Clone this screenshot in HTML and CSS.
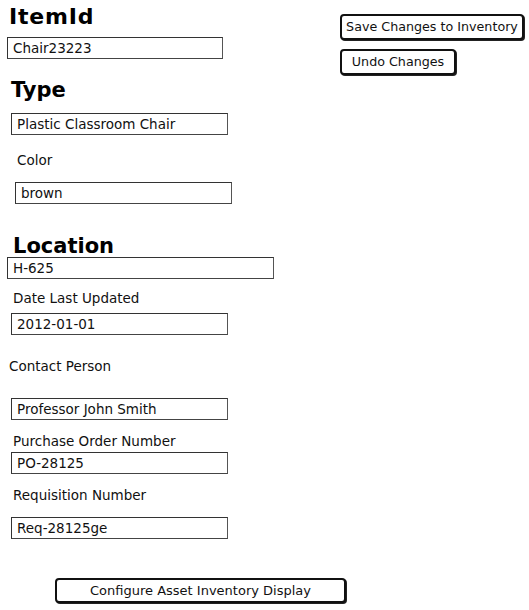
FILE: index.html
```html
<!DOCTYPE html>
<html lang="en">
<head>
<meta charset="utf-8">
<title>Asset Inventory Item</title>
<link rel="stylesheet" href="styles.css">
</head>
<body>
<div class="page">
  <div class="top">
    <form class="form">
      <h1 class="heading heading-item">ItemId</h1>
      <input class="field f-item" value="Chair23223" readonly>
      <h2 class="heading heading-type">Type</h2>
      <input class="field f-type" value="Plastic Classroom Chair" readonly>
      <div class="label l-color">Color</div>
      <input class="field f-color" value="brown" readonly>
      <h2 class="heading heading-loc">Location</h2>
      <input class="field f-loc" value="H-625" readonly>
      <div class="label l-date">Date Last Updated</div>
      <input class="field f-date" value="2012-01-01" readonly>
      <div class="label l-contact">Contact Person</div>
      <input class="field f-contact" value="Professor John Smith" readonly>
      <div class="label l-po">Purchase Order Number</div>
      <input class="field f-po" value="PO-28125" readonly>
      <div class="label l-req">Requisition Number</div>
      <input class="field f-req" value="Req-28125ge" readonly>
    </form>
    <div class="actions">
      <button class="sketch-btn btn-save" type="button">Save Changes to Inventory</button>
      <button class="sketch-btn btn-undo" type="button">Undo Changes</button>
    </div>
  </div>
  <button class="sketch-btn btn-config" type="button">Configure Asset Inventory Display</button>
</div>
</body>
</html>
```

FILE: styles.css
```css
* { box-sizing: border-box; }

html, body {
  margin: 0;
  padding: 0;
  background: #ffffff;
}

body {
  font-family: "DejaVu Sans", "Liberation Sans", sans-serif;
  color: #000;
}

.page {
  width: 529px;
  height: 610px;
  overflow: hidden;
}

.top {
  display: flex;
  align-items: flex-start;
}

.form {
  width: 280px;
  margin: 0;
  display: flex;
  flex-direction: column;
  align-items: flex-start;
}

.heading {
  margin: 0;
  font-weight: bold;
  color: #000;
}

.heading-item {
  font-size: 22px;
  line-height: 26px;
  letter-spacing: 0.8px;
  margin-top: 4px;
  margin-left: 9px;
}

.heading-type {
  font-size: 21px;
  line-height: 24px;
  margin-top: 19px;
  margin-left: 11px;
}

.heading-loc {
  font-size: 21px;
  line-height: 22px;
  margin-top: 31px;
  margin-left: 13px;
}

.label {
  font-size: 13.5px;
  line-height: 16px;
  color: #111;
}

.field {
  display: block;
  height: 22px;
  width: 217px;
  margin: 0;
  padding: 0 0 0 5px;
  border: 1px solid #333;
  border-right-color: #555;
  border-bottom-color: #444;
  border-radius: 0;
  background: #fff;
  font-family: "DejaVu Sans", "Liberation Sans", sans-serif;
  font-size: 13.5px;
  color: #111;
  outline: none;
}

.f-item { margin-top: 7px; margin-left: 7px; width: 216px; }
.f-type { margin-top: 11px; margin-left: 11px; }
.l-color { margin-top: 17px; margin-left: 17px; }
.f-color { margin-top: 14px; margin-left: 15px; }
.f-loc { margin-top: 0; margin-left: 7px; width: 267px; }
.l-date { margin-top: 11px; margin-left: 13px; }
.f-date { margin-top: 7px; margin-left: 11px; }
.l-contact { margin-top: 23px; margin-left: 9px; }
.f-contact { margin-top: 24px; margin-left: 11px; }
.l-po { margin-top: 13px; margin-left: 13px; }
.f-po { margin-top: 3px; margin-left: 11px; }
.l-req { margin-top: 13px; margin-left: 13px; }
.f-req { margin-top: 14px; margin-left: 11px; }

.actions {
  margin-left: 60px;
  padding-top: 14px;
  display: flex;
  flex-direction: column;
  align-items: flex-start;
  gap: 9px;
}

.sketch-btn {
  display: block;
  margin: 0;
  padding: 0;
  height: 26px;
  background: #fff;
  border: 2px solid #111;
  border-radius: 4px;
  box-shadow: 1px 1px 0 #222;
  font-family: "DejaVu Sans", "Liberation Sans", sans-serif;
  font-size: 12.7px;
  color: #111;
  text-align: center;
  line-height: 20px;
}

.btn-save { width: 184px; }
.btn-undo { width: 116px; }

.btn-config {
  width: 291px;
  height: 25px;
  margin-top: 39px;
  margin-left: 55px;
  font-size: 13px;
}
```
